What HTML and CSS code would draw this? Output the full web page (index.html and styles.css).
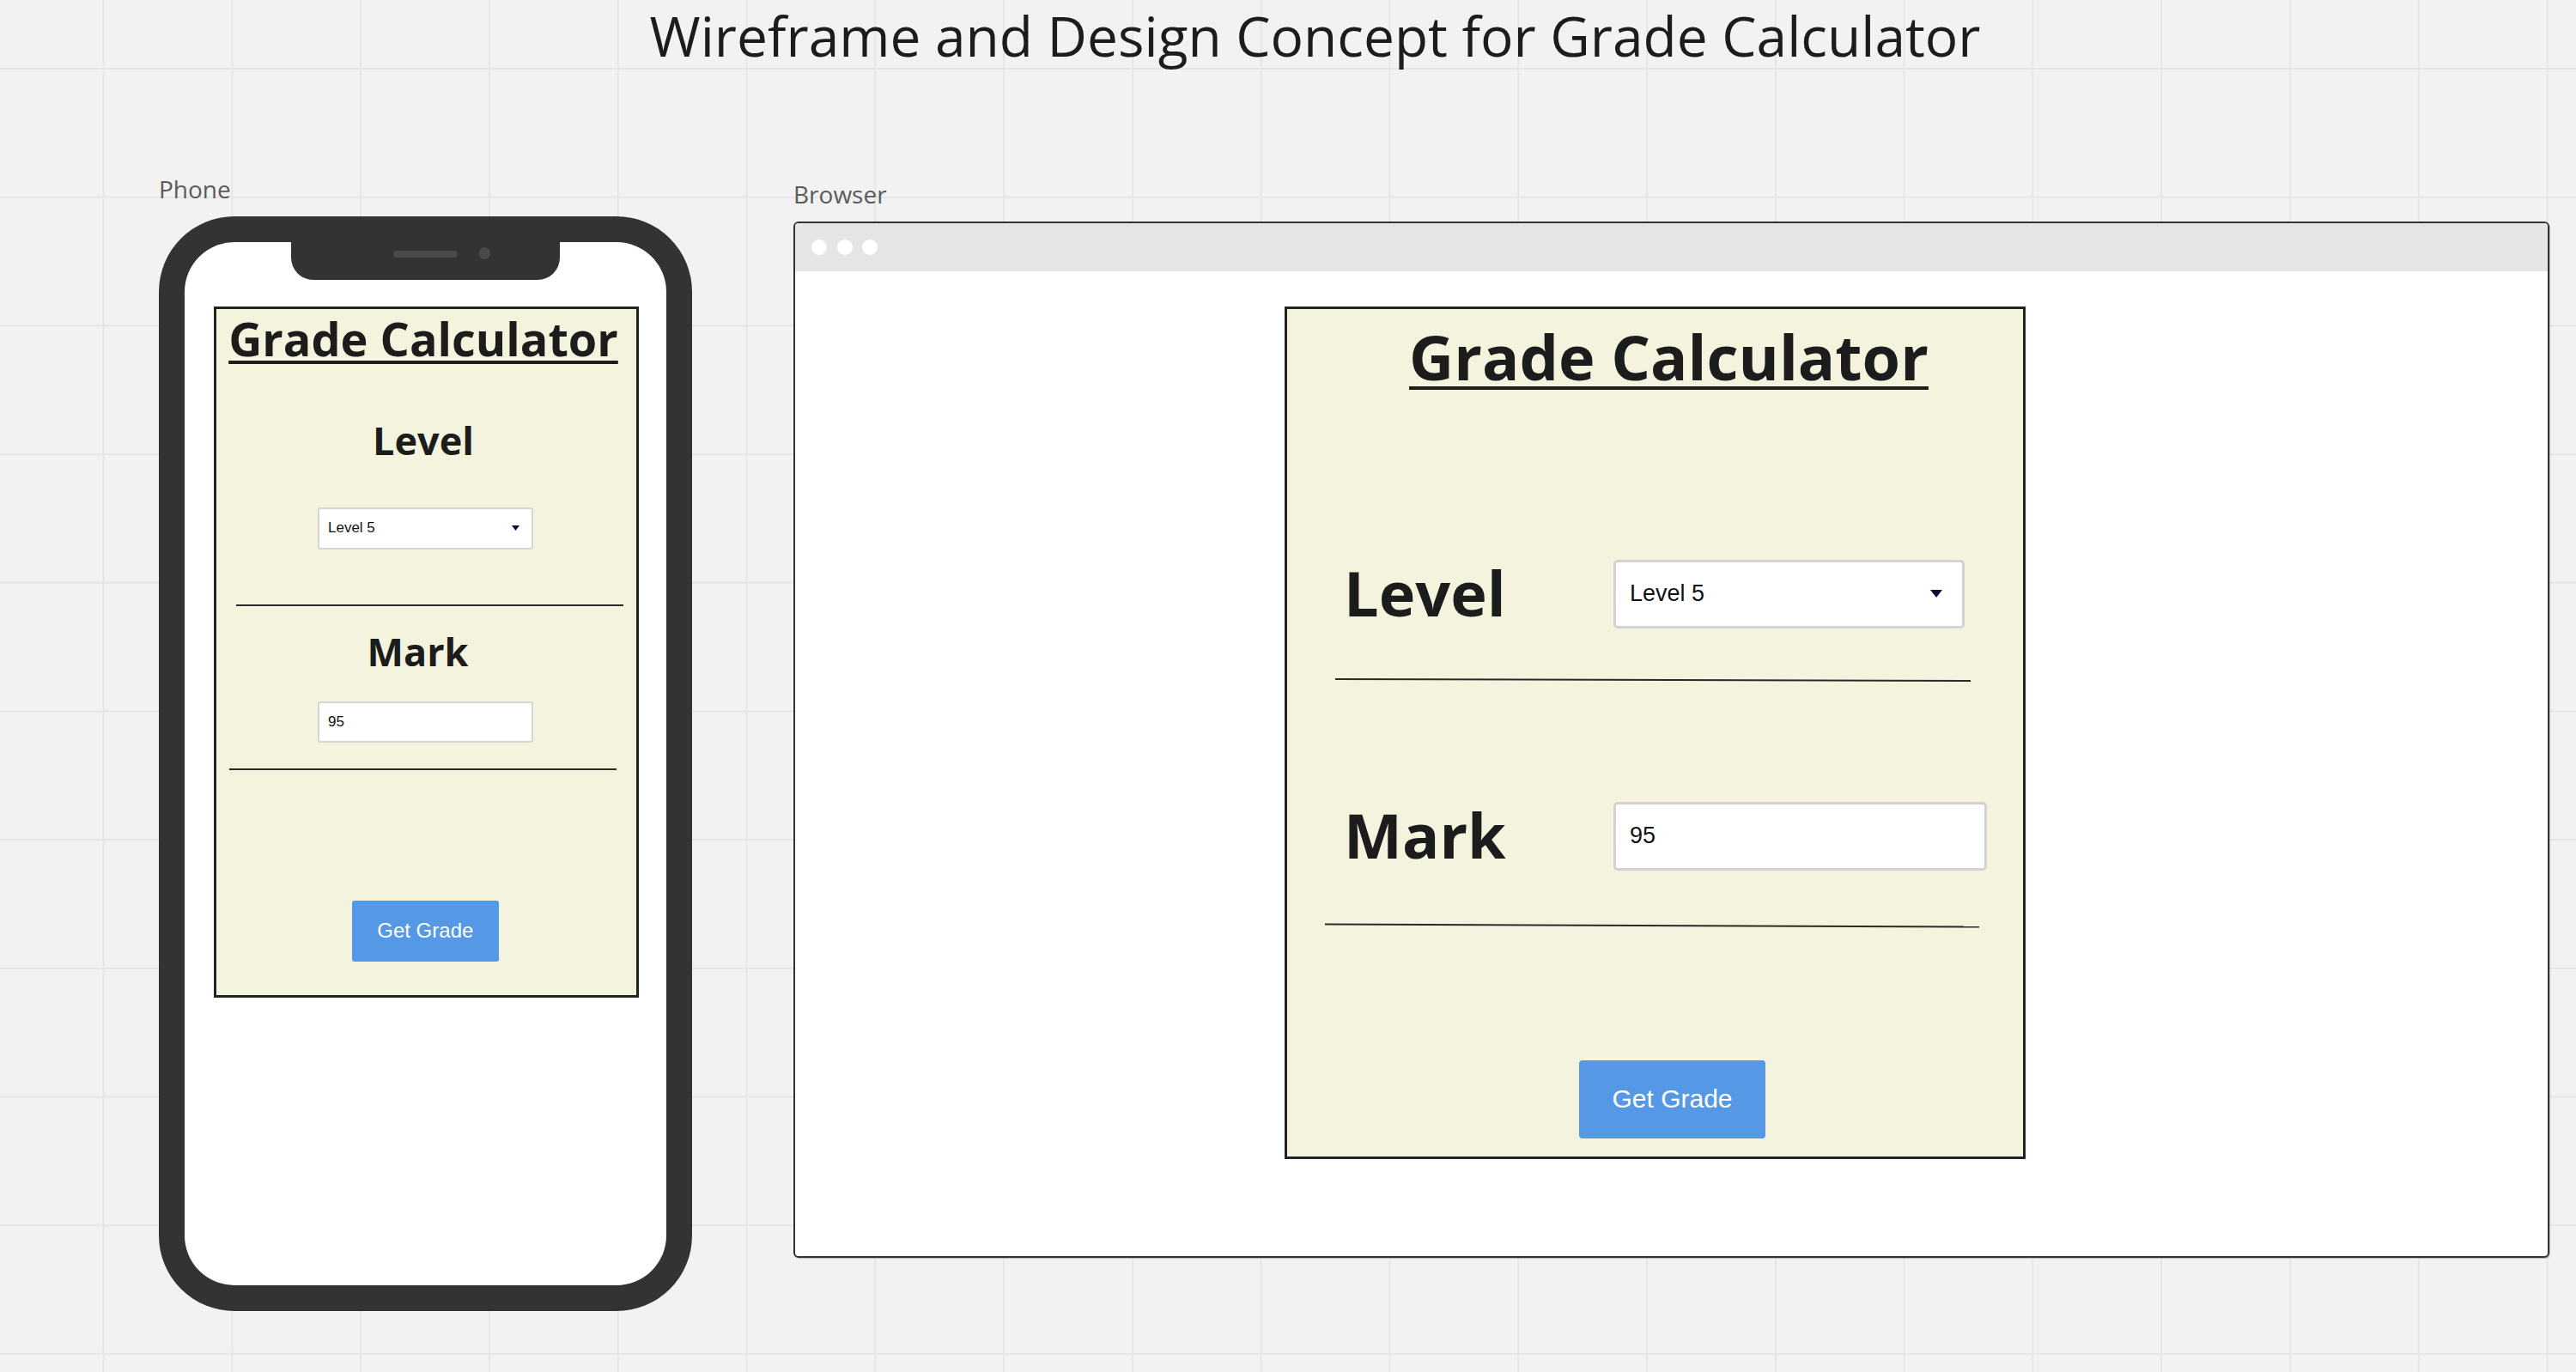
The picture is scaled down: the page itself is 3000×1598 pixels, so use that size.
FILE: index.html
```html
<!DOCTYPE html>
<html lang="en">
<head>
<meta charset="utf-8">
<title>Wireframe and Design Concept for Grade Calculator</title>
<link rel="stylesheet" href="styles.css">
</head>
<body>
<div class="canvas">
  <h1 class="title">Wireframe and Design Concept for Grade Calculator</h1>
  <div class="boards">
    <section class="board board-phone">
      <div class="board-label">Phone</div>
      <div class="phone">
        <div class="screen">
          <div class="notch"><span class="speaker"></span><span class="camera"></span></div>
          <div class="card card-phone">
            <h2 class="p-title">Grade Calculator</h2>
            <div class="p-label">Level</div>
            <div class="field p-select"><span>Level 5</span><svg class="caret-s" width="9" height="6" viewBox="0 0 9 6"><path d="M0 0H9L4.5 6Z" fill="#0b0b3a"/></svg></div>
            <div class="rule p-rule1"></div>
            <div class="p-label p-mark">Mark</div>
            <div class="field p-input"><span>95</span></div>
            <div class="rule p-rule2"></div>
            <div class="btn p-btn">Get Grade</div>
          </div>
        </div>
      </div>
    </section>
    <section class="board board-browser">
      <div class="board-label">Browser</div>
      <div class="window">
        <div class="titlebar"><span class="dot"></span><span class="dot"></span><span class="dot"></span></div>
        <div class="viewport">
          <div class="card card-web">
            <h2 class="w-title">Grade Calculator</h2>
            <div class="w-row w-row-level">
              <div class="w-label">Level</div>
              <div class="field w-select"><span>Level 5</span><svg width="14" height="9" viewBox="0 0 14 9"><path d="M0 0H14L7 9Z" fill="#0b0b3a"/></svg></div>
            </div>
            <div class="rule w-rule1"></div>
            <div class="w-row w-row-mark">
              <div class="w-label">Mark</div>
              <div class="field w-input"><span>95</span></div>
            </div>
            <div class="rule w-rule2"></div>
            <div class="btn w-btn">Get Grade</div>
          </div>
        </div>
      </div>
    </section>
  </div>
</div>
</body>
</html>
```
FILE: styles.css
```css
* { box-sizing: border-box; }
html, body { margin: 0; padding: 0; }
body {
  width: 3000px;
  height: 1598px;
  overflow: hidden;
  background-color: #f2f2f2;
  background-image:
    linear-gradient(to right, #e6e6e6 0, #e6e6e6 2px, transparent 2px),
    linear-gradient(to bottom, #e6e6e6 0, #e6e6e6 2px, transparent 2px);
  background-size: 149.8px 149.7px;
  background-position: 119.5px 79px;
  font-family: "Open Sans", "DejaVu Sans", sans-serif;
  color: #1c1c1c;
}

.title {
  margin: 0;
  font-weight: 400;
  font-size: 64px;
  line-height: 64px;
  padding-top: 10px;
  padding-left: 63px;
  text-align: center;
  color: #1c1c1c;
}

.boards {
  display: flex;
  align-items: flex-start;
  gap: 118px;
  margin-top: 132px;
  padding-left: 185px;
}
.board-browser { padding-top: 6px; }
.board-label {
  font-size: 28px;
  line-height: 28px;
  color: #5b5b5b;
  margin-bottom: 18px;
}

/* Phone */
.phone {
  width: 621px;
  height: 1275px;
  padding: 30px;
  background: #333;
  border-radius: 88px;
}
.screen {
  position: relative;
  height: 100%;
  background: #fff;
  border-radius: 58px;
  padding: 75px 0 0 34px;
}
.notch {
  position: absolute;
  top: 0;
  left: 123.6px;
  width: 313.4px;
  height: 44.3px;
  background: #333;
  border-radius: 0 0 26px 26px;
  display: flex;
  align-items: flex-start;
  gap: 25.5px;
  padding-left: 119.4px;
}
.speaker {
  width: 75px;
  height: 7.5px;
  margin-top: 10px;
  border-radius: 4px;
  background: #4a4a4a;
}
.camera {
  width: 13px;
  height: 14px;
  margin-top: 6.3px;
  border-radius: 50%;
  background: #4a4a4a;
}

/* Cards */
.card {
  background: #f4f4de;
  border: 3px solid #222;
  display: flex;
  flex-direction: column;
  align-items: flex-start;
}
.field {
  display: flex;
  align-items: center;
  justify-content: space-between;
  background: #fff;
  font-family: "Liberation Sans", Arial, sans-serif;
  color: #111;
}
.rule {
  height: 2px;
  background: #2a2a2a;
}
.btn {
  display: flex;
  align-items: center;
  justify-content: center;
  background: #5599e6;
  color: #fff;
  font-family: "Liberation Sans", Arial, sans-serif;
  border-radius: 4px;
}

.card-phone {
  width: 495px;
  height: 805px;
  padding-top: 7.3px;
}
.p-title {
  align-self: stretch;
  margin: 0;
  font-size: 54px;
  line-height: 54px;
  font-weight: 700;
  text-align: center;
  padding-right: 7px;
  text-decoration: underline;
  text-decoration-thickness: 3.5px;
  text-underline-offset: 4.5px;
}
.p-label {
  align-self: stretch;
  text-align: center;
  font-size: 45px;
  line-height: 46px;
  font-weight: 700;
  margin-top: 69px;
  padding-right: 7px;
}
.p-mark {
  margin-top: 30px;
  padding-right: 20px;
}
.p-select,
.p-input {
  margin-left: 118px;
  width: 250.5px;
  border: 2px solid #d4d4d4;
  border-radius: 3px;
  padding: 0 13.5px 0 10px;
  font-size: 17px;
}
.p-select { margin-top: 54.5px; height: 49.3px; }
.p-input { margin-top: 35.5px; height: 48px; }
.p-rule1 { margin-top: 63.6px; margin-left: 23px; width: 450.5px; }
.p-rule2 { margin-top: 29.6px; margin-left: 15px; width: 451px; }
.p-btn {
  margin-top: 152.3px;
  margin-left: 158px;
  width: 170.6px;
  height: 70.6px;
  font-size: 24px;
  border-radius: 3px;
}

/* Browser */
.window {
  width: 2045px;
  height: 1207px;
  border: 2px solid #333;
  border-radius: 6px;
  background: #fff;
  overflow: hidden;
  box-shadow: 1px 1px 1px rgba(0, 0, 0, 0.25);
  display: flex;
  flex-direction: column;
}
.titlebar {
  flex: none;
  height: 56px;
  background: #e5e5e5;
  display: flex;
  align-items: center;
  gap: 11.5px;
  padding-left: 19px;
}
.dot {
  width: 18px;
  height: 18px;
  border-radius: 50%;
  background: #fff;
}
.viewport {
  padding: 41px 0 0 570px;
}
.card-web {
  width: 863px;
  height: 993px;
  padding-top: 19.4px;
}
.w-title {
  align-self: stretch;
  margin: 0;
  font-size: 72px;
  line-height: 72px;
  font-weight: 700;
  text-align: center;
  padding-left: 32px;
  text-decoration: underline;
  text-decoration-thickness: 4px;
  text-underline-offset: 6.5px;
}
.w-row {
  display: flex;
  align-items: center;
  height: 80px;
  margin-left: 66px;
}
.w-row-level { margin-top: 200.6px; }
.w-row-mark { margin-top: 141px; }
.w-label {
  width: 314px;
  font-size: 72px;
  line-height: 80px;
  font-weight: 700;
  margin-bottom: 3px;
}
.w-select,
.w-input {
  height: 80px;
  border: 3px solid #d2d2d2;
  border-radius: 5px;
  padding: 0 23px 0 16px;
  font-size: 27px;
}
.w-select { width: 409px; }
.w-input { width: 435px; }
.w-rule1 {
  margin-top: 59px;
  margin-left: 56px;
  width: 740px;
  transform: rotate(0.15deg);
}
.w-rule2 {
  margin-top: 63.5px;
  margin-left: 44px;
  width: 762px;
  transform: rotate(0.22deg);
}
.w-btn {
  margin-top: 155.5px;
  margin-left: 340px;
  width: 217px;
  height: 91px;
  font-size: 30px;
}
```
